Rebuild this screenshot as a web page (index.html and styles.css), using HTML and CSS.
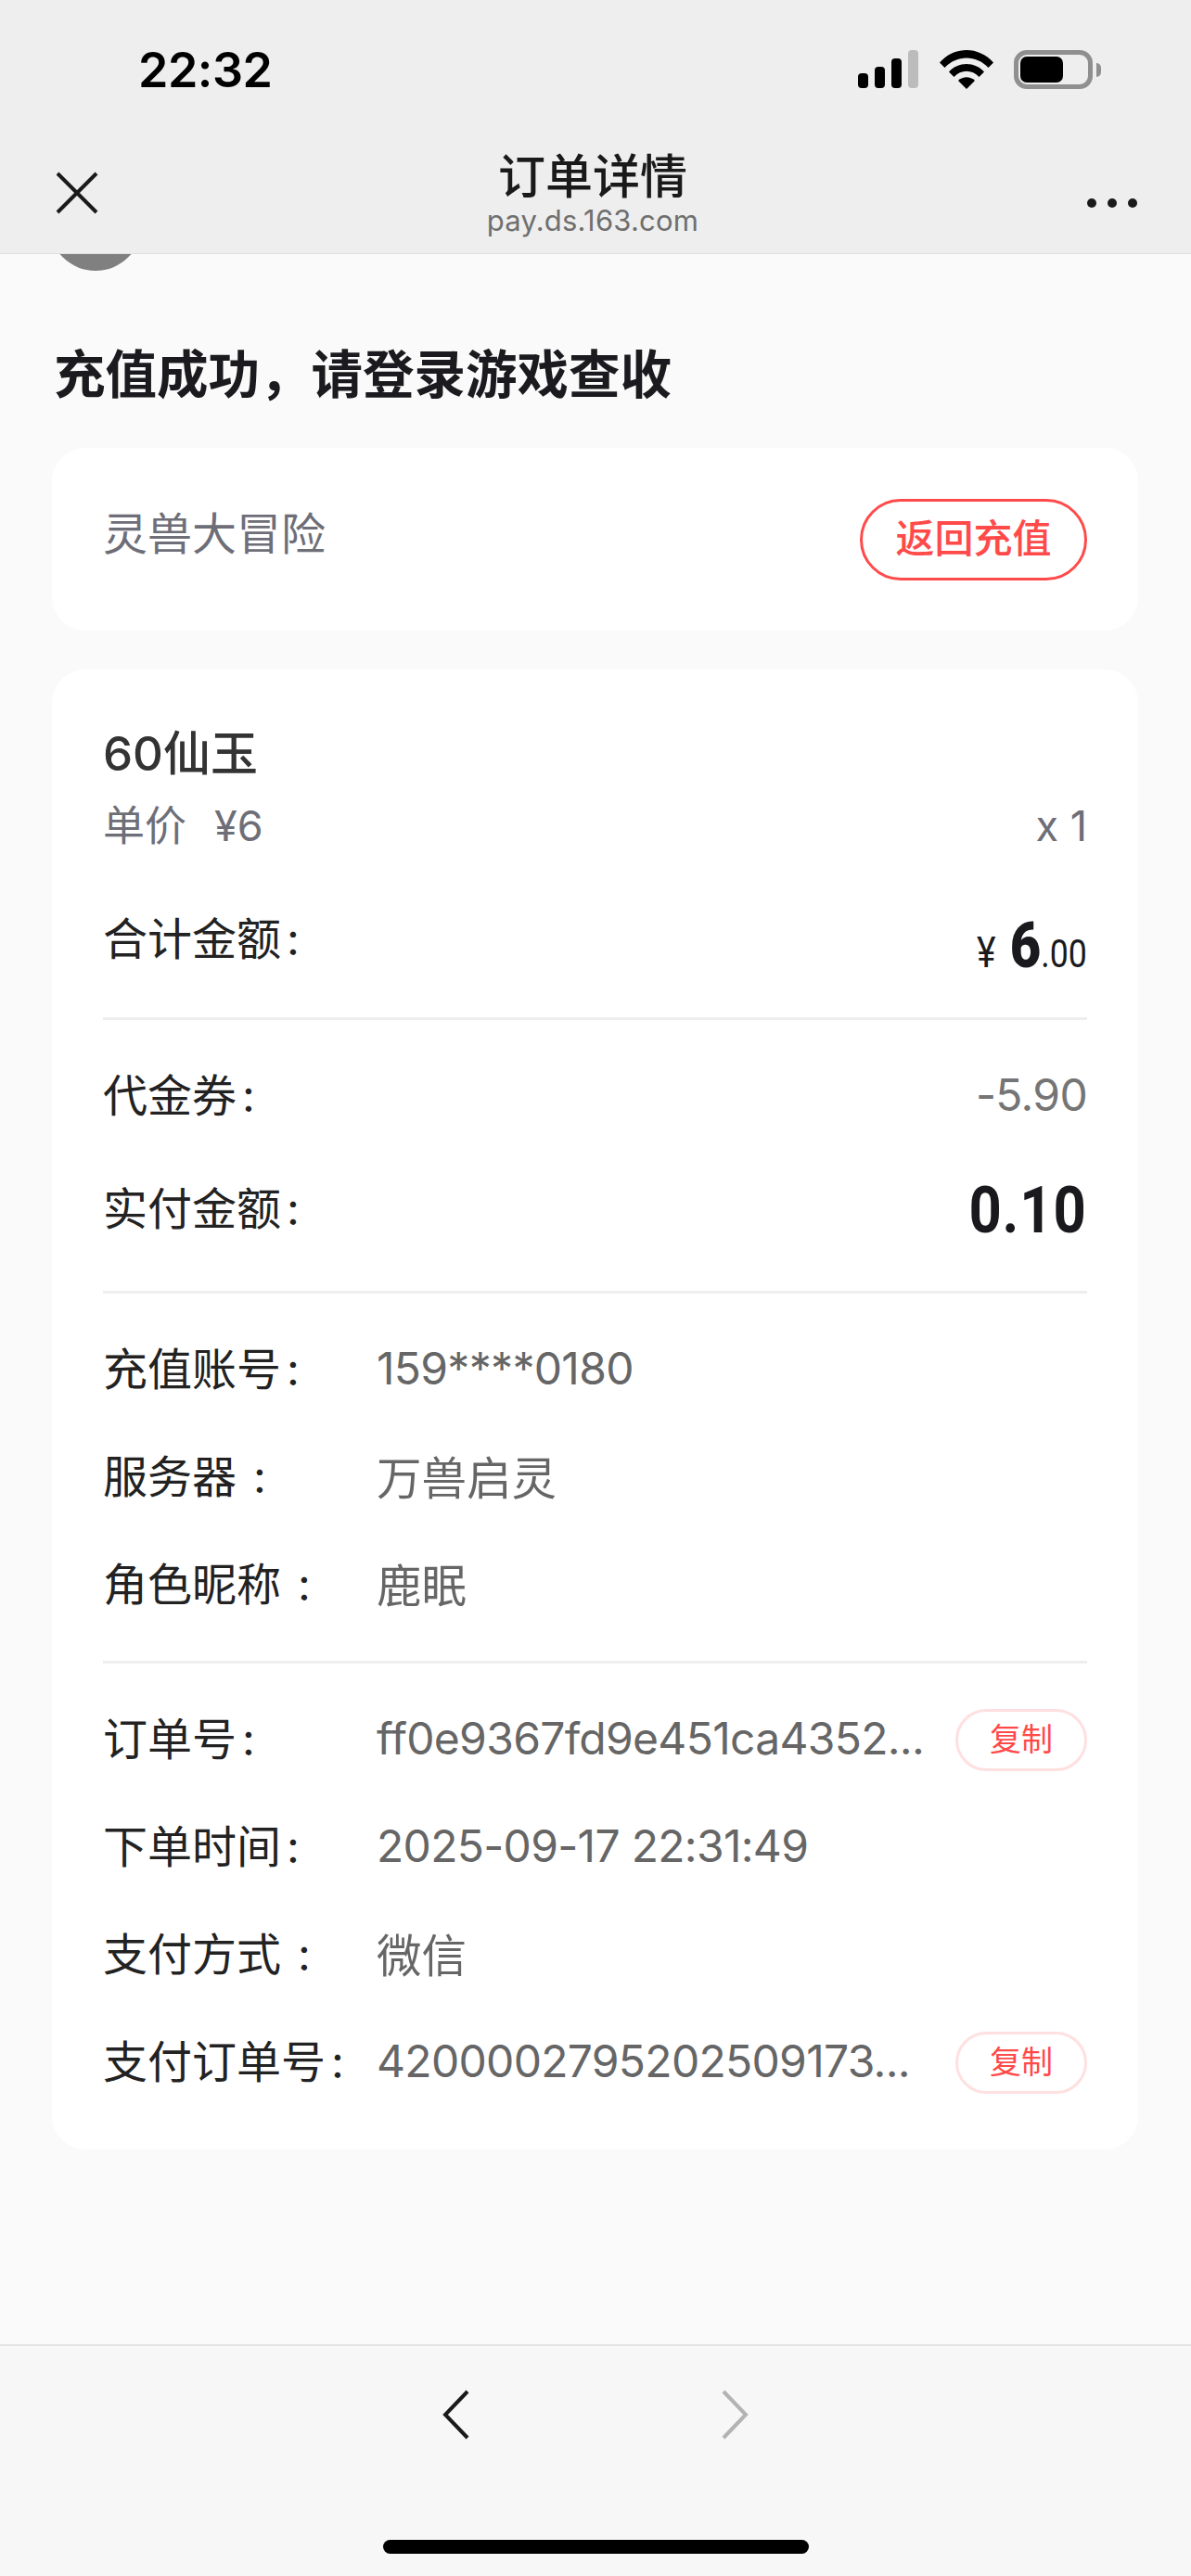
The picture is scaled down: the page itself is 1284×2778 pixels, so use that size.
FILE: index.html
```html
<!DOCTYPE html>
<html lang="zh-CN">
<head>
    <meta charset="UTF-8">
    <meta name="viewport" content="width=device-width, initial-scale=1.0">
    <title>订单详情</title>
    <link rel="stylesheet" href="styles.css">
</head>
<body>
    <header class="top-bar">
        <div class="status-bar">
            <span class="time">22:32</span>
            <div class="status-icons">
                <svg class="signal" width="65" height="41" viewBox="0 0 65 41">
                    <rect x="0" y="25" width="11" height="16" rx="4"/>
                    <rect x="18" y="18" width="11" height="23" rx="4"/>
                    <rect x="36" y="9" width="11" height="32" rx="4"/>
                    <rect x="54" y="0" width="11" height="41" rx="4" fill="#bcbcbc"/>
                </svg>
                <svg class="wifi" width="58" height="42" viewBox="0 0 58 42">
                    <path d="M0 13.500C16-4.500 42-4.500 58 13.500L52.500 19C39.500 5 18.500 5 5.500 19Z"/>
                    <path d="M10 23.500C20 12 38 12 48 23.500L42.500 29C35 20.500 23 20.500 15.500 29Z"/>
                    <path d="M20 33C25 28 33 28 38 33L29 42Z"/>
                </svg>
                <div class="battery"><span class="battery-level"></span></div>
                <span class="battery-cap"></span>
            </div>
        </div>
        <nav class="nav-bar">
            <svg class="close" width="46" height="46" viewBox="0 0 46 46">
                <path d="M2 2L44 44M44 2L2 44" stroke="#1a1a1a" stroke-width="4" fill="none"/>
            </svg>
            <div class="nav-title">
                <div class="nav-name">订单详情</div>
                <div class="nav-host">pay.ds.163.com</div>
            </div>
            <div class="more"><span></span><span></span><span></span></div>
        </nav>
    </header>

    <main class="content">
        <div class="avatar"></div>
        <h1>充值成功，请登录游戏查收</h1>

        <section class="card game-card">
            <span class="game-name">灵兽大冒险</span>
            <a class="back-btn">返回充值</a>
        </section>

        <section class="card detail-card">
            <div class="product">60仙玉</div>
            <div class="price-row"><span>单价<span class="unit-price">¥6</span></span><span>x 1</span></div>
            <div class="row total-row">
                <span class="label">合计金额<i>:</i></span>
                <span class="total"><span class="yen">¥</span><b>6</b><span class="cents">.00</span></span>
            </div>
            <div class="divider"></div>

            <div class="row">
                <span class="label">代金券<i>:</i></span>
                <span class="discount">-5.90</span>
            </div>
            <div class="row paid-row">
                <span class="label">实付金额<i>:</i></span>
                <span class="paid">0.10</span>
            </div>
            <div class="divider"></div>

            <div class="row">
                <span class="label">充值账号<i>:</i></span>
                <span class="value num">159****0180</span>
            </div>
            <div class="row">
                <span class="label">服务器<i class="wide">:</i></span>
                <span class="value">万兽启灵</span>
            </div>
            <div class="row">
                <span class="label">角色昵称<i class="wide">:</i></span>
                <span class="value">鹿眠</span>
            </div>
            <div class="divider"></div>

            <div class="row">
                <span class="label">订单号<i>:</i></span>
                <span class="value num">ff0e9367fd9e451ca4352...</span>
                <a class="copy-btn">复制</a>
            </div>
            <div class="row">
                <span class="label">下单时间<i>:</i></span>
                <span class="value num">2025-09-17 22:31:49</span>
            </div>
            <div class="row">
                <span class="label">支付方式<i class="wide">:</i></span>
                <span class="value">微信</span>
            </div>
            <div class="row">
                <span class="label">支付订单号<i>:</i></span>
                <span class="value num">4200002795202509173...</span>
                <a class="copy-btn">复制</a>
            </div>
        </section>
    </main>

    <footer class="bottom-bar">
        <div class="arrows">
            <svg width="30" height="54" viewBox="0 0 30 54">
                <path d="M28 2L4 27L28 52" stroke="#1a1a1a" stroke-width="4" fill="none"/>
            </svg>
            <svg width="30" height="54" viewBox="0 0 30 54">
                <path d="M2 2L26 27L2 52" stroke="#b3b3b3" stroke-width="4" fill="none"/>
            </svg>
        </div>
        <div class="home-indicator"></div>
    </footer>
</body>
</html>
```

FILE: styles.css
```css
* {
    box-sizing: border-box;
}

body {
    font-family: Inter, "Noto Sans CJK SC", sans-serif;
    background-color: #fafafa;
    margin: 0;
    height: 2778px;
    display: flex;
    flex-direction: column;
    overflow: hidden;
}

/* top bar */
.top-bar {
    position: relative;
    z-index: 1;
    height: 274px;
    flex: none;
    background-color: #eeeeee;
    border-bottom: 1px solid #dfdfdf;
}

.status-bar {
    height: 150px;
    display: flex;
    justify-content: space-between;
    padding: 45px 97px 0 149px;
}

.time {
    font-size: 52px;
    font-weight: 600;
    line-height: 62px;
    color: #000;
    letter-spacing: -0.5px;
}

.status-icons {
    display: flex;
    align-items: flex-start;
    padding-top: 9px;
}

.wifi {
    margin-left: 23px;
}

.battery {
    width: 85px;
    height: 42px;
    margin-left: 22px;
    padding: 2px;
    border: 5px solid #8f8f8f;
    border-radius: 14px;
}

.battery-level {
    display: block;
    width: 46px;
    height: 100%;
    background-color: #000;
    border-radius: 7px;
}

.battery-cap {
    width: 5px;
    height: 15px;
    margin: 14px 0 0 4px;
    background-color: #8f8f8f;
    border-radius: 0 8px 8px 0;
}

.nav-bar {
    display: flex;
    justify-content: space-between;
    padding: 11px 58px 0 60px;
}

.close {
    margin-top: 24px;
}

.nav-name {
    font-size: 51px;
    line-height: 60px;
    font-weight: 500;
    text-align: center;
    color: #1a1a1a;
}

.nav-host {
    font-size: 31px;
    line-height: 33px;
    letter-spacing: 0.2px;
    text-align: center;
    color: #6f6f6f;
}

.more {
    display: flex;
    gap: 12px;
    padding-top: 53px;
}

.more span {
    width: 10px;
    height: 10px;
    border-radius: 50%;
    background-color: #1a1a1a;
}

/* content */
.content {
    flex: 1;
    padding: 0 57px 0 56px;
}

.avatar {
    width: 100px;
    height: 100px;
    margin: -82px 0 0 -3px;
    border-radius: 50%;
    background-color: #808080;
}

h1 {
    margin: 76px 0 0 2px;
    font-size: 55.5px;
    line-height: 72px;
    font-weight: 700;
    color: #1b1b1f;
}

.card {
    background-color: #fff;
    border-radius: 36px;
    padding: 0 55px;
}

.game-card {
    height: 197px;
    margin-top: 43px;
    display: flex;
    justify-content: space-between;
    align-items: center;
}

.game-name {
    font-size: 48px;
    color: #6e6e78;
    margin-top: -20px;
}

.back-btn {
    width: 245px;
    height: 88px;
    border: 3px solid #ff4a4a;
    border-radius: 44px;
    font-size: 42px;
    font-weight: 500;
    line-height: 80px;
    text-align: center;
    color: #ff4a4a;
}

.detail-card {
    margin-top: 42px;
    padding-top: 57px;
    padding-bottom: 38px;
}

.product {
    font-size: 51px;
    line-height: 68px;
    font-weight: 500;
    color: #333;
}

.price-row {
    display: flex;
    justify-content: space-between;
    margin-top: 10px;
    font-size: 45px;
    line-height: 68px;
    color: #6e6e78;
}

.unit-price {
    margin-left: 30px;
}

.row {
    display: flex;
    align-items: center;
    height: 116px;
}

.total-row {
    margin-top: 26px;
    margin-bottom: 30px;
}

.paid-row {
    margin-top: 6px;
    margin-bottom: 32px;
}

.label {
    width: 295px;
    flex: none;
    margin-top: -4px;
    font-size: 48px;
    color: #222;
}

.total-row .label {
    margin-top: 0;
}

.label i {
    font-style: normal;
    margin-left: 6px;
}

.label i.wide {
    margin-left: 18px;
}

.value {
    flex: 1;
    font-size: 48.500px;
    color: #666;
    white-space: nowrap;
}

.num {
    font-size: 48px;
    letter-spacing: -0.7px;
}

.total {
    margin-left: auto;
    padding-top: 22px;
    color: #1a1a1e;
    font-family: Roboto, sans-serif;
    transform: scaleX(0.85);
    transform-origin: right center;
}

.yen {
    font-size: 46px;
    margin-right: 18px;
}

.total b {
    font-size: 68px;
    font-weight: 900;
    line-height: 1;
}

.cents {
    font-size: 42px;
}

.discount {
    margin-left: auto;
    font-size: 48px;
    letter-spacing: -0.7px;
    color: #757575;
}

.paid {
    margin-left: auto;
    padding-top: 6px;
    font-family: Roboto, sans-serif;
    font-size: 70px;
    font-weight: 700;
    letter-spacing: 1px;
    color: #1a1a1e;
    transform: scaleX(0.88);
    transform-origin: right center;
}

.divider {
    height: 3px;
    margin: 26px 0 22px;
    background-color: #eeeeee;
}

.copy-btn {
    width: 142px;
    height: 67px;
    flex: none;
    margin-top: 4px;
    border: 3px solid #ffe0e0;
    border-radius: 34px;
    font-size: 34px;
    line-height: 59px;
    text-align: center;
    color: #ff4a4a;
}

/* bottom bar */
.bottom-bar {
    height: 250px;
    flex: none;
    background-color: #f7f7f7;
    border-top: 2px solid #e3e3e3;
    padding-top: 47px;
}

.arrows {
    display: flex;
    justify-content: center;
    gap: 272px;
    margin-left: -1px;
}

.home-indicator {
    width: 459px;
    height: 15px;
    margin: 108px 0 0 413px;
    border-radius: 8px;
    background-color: #000;
}
```
